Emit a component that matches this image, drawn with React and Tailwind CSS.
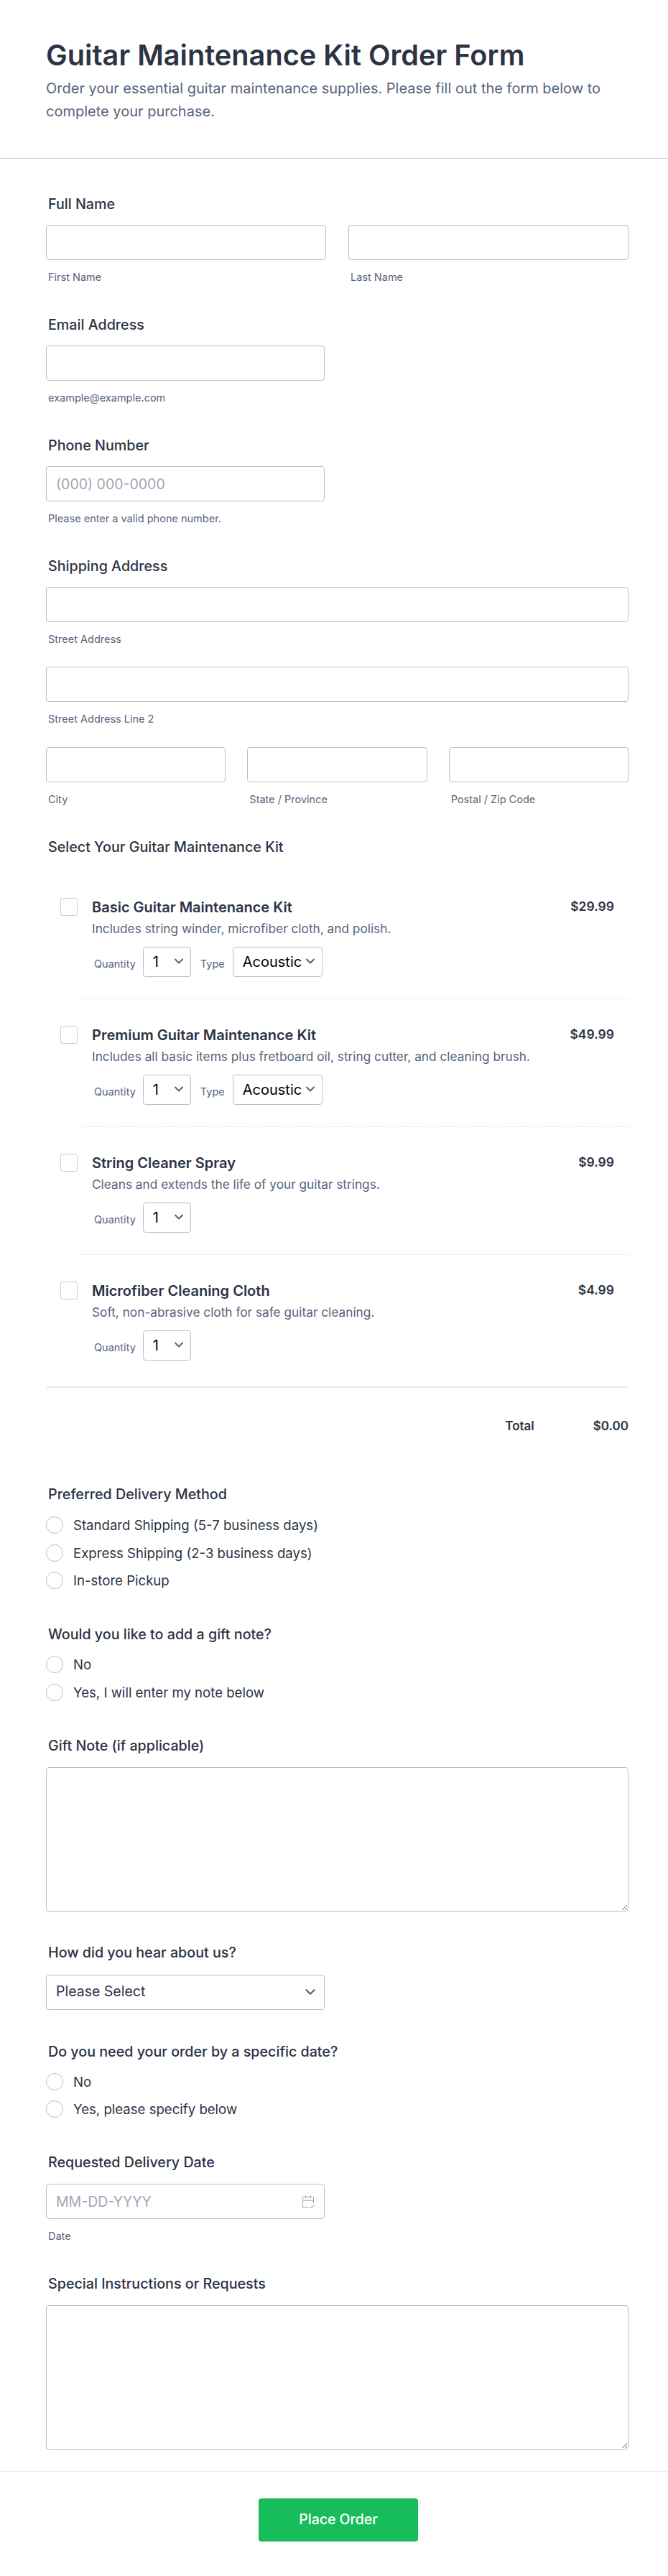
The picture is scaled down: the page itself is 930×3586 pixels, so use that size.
import { ChevronDown, CalendarCheck2 } from "lucide-react";

const kits = [
  { name: "Basic Guitar Maintenance Kit", desc: "Includes string winder, microfiber cloth, and polish.", price: "$29.99", type: true },
  { name: "Premium Guitar Maintenance Kit", desc: "Includes all basic items plus fretboard oil, string cutter, and cleaning brush.", price: "$49.99", type: true },
  { name: "String Cleaner Spray", desc: "Cleans and extends the life of your guitar strings.", price: "$9.99", type: false },
  { name: "Microfiber Cleaning Cloth", desc: "Soft, non-abrasive cloth for safe guitar cleaning.", price: "$4.99", type: false },
];

function Label({ children, className = "" }) {
  return <div className={"pl-[3px] text-[19.7px] leading-[28px] font-medium text-[#2c3345] " + className}>{children}</div>;
}

function Sub({ children }) {
  return <div className="pl-[3px] mt-[14px] text-[14.5px] leading-[20px] text-[#57647e]">{children}</div>;
}

function Input({ className = "", placeholder }) {
  return (
    <input
      placeholder={placeholder}
      className={"block h-[49px] rounded-[4px] border border-[#b8bdc9] bg-white px-[13px] text-[19.5px] placeholder:text-[#a0a7b6] " + className}
    />
  );
}

function SmallSelect({ value, width }) {
  return (
    <div className={"relative h-[42px] " + width}>
      <select className="h-full w-full appearance-none rounded-[4px] border border-[#b8bdc9] bg-white pl-[13px] text-[20px] text-black">
        <option>{value}</option>
      </select>
      <ChevronDown size={20} strokeWidth={2.5} className="absolute right-[7px] top-[10px] text-[#57647e]" />
    </div>
  );
}

function Radio({ children }) {
  return (
    <label className="flex h-[24px] items-center">
      <span className="h-[24px] w-[24px] shrink-0 rounded-full border border-[#b8bdc9] bg-white" />
      <span className="ml-[14px] text-[18.6px] leading-[24px] text-[#2c3345]">{children}</span>
    </label>
  );
}

function RadioGroup({ options, className = "mt-[16px]" }) {
  return (
    <div className={"flex flex-col gap-[14.5px] " + className}>
      {options.map((o) => (
        <Radio key={o}>{o}</Radio>
      ))}
    </div>
  );
}

function Kit({ kit, last }) {
  return (
    <div className={"ml-[43px] flex pt-[36px] " + (last ? "h-[183px]" : "h-[178px] border-b border-dashed border-[#e3e5ea]")}>
      <span className="-ml-[23px] mt-[1px] h-[25px] w-[24px] shrink-0 rounded-[3px] border border-[#c8ccd6] bg-white" />
      <div className="ml-[20px] flex-1">
        <div className="flex items-start justify-between pr-[20px]">
          <div className="text-[20px] leading-[28px] font-semibold text-[#2c3345]">{kit.name}</div>
          <div className="mt-[1px] text-[17.5px] leading-[24px] font-semibold text-[#2c3345]">{kit.price}</div>
        </div>
        <div className="mt-[4px] text-[17.25px] leading-[24px] text-[#57647e]">{kit.desc}</div>
        <div className="mt-[13px] flex items-center pl-[3px]">
          <span className="mt-[6px] mr-[10px] text-[14.5px] text-[#57647e]">Quantity</span>
          <SmallSelect value="1" width="w-[67px]" />
          {kit.type && <span className="mt-[6px] ml-[13px] mr-[11px] text-[14.5px] text-[#57647e]">Type</span>}
          {kit.type && <SmallSelect value="Acoustic" width="w-[125px]" />}
        </div>
      </div>
    </div>
  );
}

export default function App() {
  return (
    <div className="w-[930px] h-[3586px] bg-white font-['Inter',sans-serif]">
      <div className="h-[221px] border-b border-[#d3d6dd] pl-[64px] pr-[55px] pt-[52px]">
        <h1 className="text-[39.7px] leading-[50px] font-semibold text-[#2c3345]">Guitar Maintenance Kit Order Form</h1>
        <p className="mt-[5px] text-[20px] leading-[32px] text-[#57647e]">
          Order your essential guitar maintenance supplies. Please fill out the form below to complete your purchase.
        </p>
      </div>

      <div className="pl-[64px] pr-[55px] pt-[49px]">
        <Label>Full Name</Label>
        <div className="mt-[15px] grid grid-cols-2 gap-[31px]">
          <div><Input className="w-full" /><Sub>First Name</Sub></div>
          <div><Input className="w-full" /><Sub>Last Name</Sub></div>
        </div>

        <Label className="mt-[42px]">Email Address</Label>
        <div className="mt-[15px]"><Input className="w-[388px]" /><Sub>example@example.com</Sub></div>

        <Label className="mt-[42px]">Phone Number</Label>
        <div className="mt-[15px]"><Input className="w-[388px]" placeholder="(000) 000-0000" /><Sub>Please enter a valid phone number.</Sub></div>

        <Label className="mt-[42px]">Shipping Address</Label>
        <div className="mt-[15px]"><Input className="w-full" /><Sub>Street Address</Sub></div>
        <div className="mt-[28px]"><Input className="w-full" /><Sub>Street Address Line 2</Sub></div>
        <div className="mt-[29px] grid grid-cols-3 gap-[30px]">
          <div><Input className="w-full" /><Sub>City</Sub></div>
          <div><Input className="w-full" /><Sub>State / Province</Sub></div>
          <div><Input className="w-full" /><Sub>Postal / Zip Code</Sub></div>
        </div>

        <Label className="mt-[42px]">Select Your Guitar Maintenance Kit</Label>
        <div className="mt-[20px]">
          {kits.map((k, i) => (
            <Kit key={k.name} kit={k} last={i === kits.length - 1} />
          ))}
        </div>
        <div className="h-[2px] bg-[#eceef1]" />
        <div className="mt-[39px] flex justify-end text-[17px] leading-[28px] font-semibold text-[#2c3345]">
          <span>Total</span>
          <span className="ml-[82px]">$0.00</span>
        </div>

        <Label className="mt-[67px]">Preferred Delivery Method</Label>
        <RadioGroup className="mt-[17px]" options={["Standard Shipping (5-7 business days)", "Express Shipping (2-3 business days)", "In-store Pickup"]} />

        <Label className="mt-[49px]">Would you like to add a gift note?</Label>
        <RadioGroup options={["No", "Yes, I will enter my note below"]} />

        <Label className="mt-[48px]">Gift Note (if applicable)</Label>
        <textarea className="mt-[16px] block h-[201px] w-full rounded-[4px] border border-[#b8bdc9] bg-white" />

        <Label className="mt-[43px]">How did you hear about us?</Label>
        <div className="relative mt-[17px] h-[49px] w-[388px]">
          <select className="h-full w-full appearance-none rounded-[4px] border border-[#b8bdc9] bg-white pl-[13px] text-[19.5px] text-[#2c3345]">
            <option>Please Select</option>
          </select>
          <ChevronDown size={22} strokeWidth={2.5} className="absolute right-[9px] top-[13px] text-[#57647e]" />
        </div>

        <Label className="mt-[44px]">Do you need your order by a specific date?</Label>
        <RadioGroup options={["No", "Yes, please specify below"]} />

        <Label className="mt-[48px]">Requested Delivery Date</Label>
        <div className="relative mt-[16px] w-[388px]">
          <Input className="w-full" placeholder="MM-DD-YYYY" />
          <CalendarCheck2 size={20} strokeWidth={1.25} className="absolute right-[13px] top-[15px] text-[#a0a7b6]" />
          <Sub>Date</Sub>
        </div>

        <Label className="mt-[42px]">Special Instructions or Requests</Label>
        <textarea className="mt-[16px] block h-[201px] w-full rounded-[4px] border border-[#b8bdc9] bg-white" />
      </div>

      <div className="mt-[30px] flex justify-center border-t border-[#eceef1] pl-[12px] pt-[37px]">
        <button className="h-[60px] w-[222px] rounded-[4px] bg-[#18bd5b] text-[19.5px] font-medium text-white">Place Order</button>
      </div>
    </div>
  );
}
